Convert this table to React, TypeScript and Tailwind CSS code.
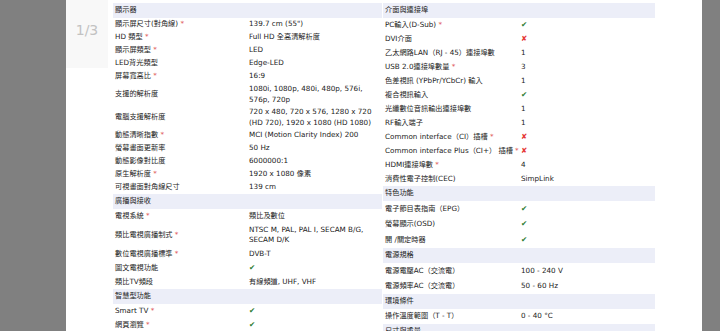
import React from "react";

type Val = "check" | "cross" | string[];
type Row = { label: string; star?: boolean; value: Val; h: string };
type Section = { title: string; rows: Row[] };

const leftSections: Section[] = [
  {
    title: "顯示器",
    rows: [
      { label: "顯示屏尺寸(對角線)", star: true, value: ["139.7 cm (55\")"], h: "h-[13px]" },
      { label: "HD 類型", star: true, value: ["Full HD 全高清解析度"], h: "h-[13px]" },
      { label: "顯示屏類型", star: true, value: ["LED"], h: "h-[13px]" },
      { label: "LED背光類型", value: ["Edge-LED"], h: "h-[13px]" },
      { label: "屏幕寬高比", star: true, value: ["16:9"], h: "h-[13px]" },
      { label: "支援的解析度", value: ["1080i, 1080p, 480i, 480p, 576i,", "576p, 720p"], h: "h-[23px]" },
      { label: "電腦支援解析度", value: ["720 x 480, 720 x 576, 1280 x 720", "(HD 720), 1920 x 1080 (HD 1080)"], h: "h-[23px]" },
      { label: "動態清晰指數", star: true, value: ["MCI (Motion Clarity Index) 200"], h: "h-[13px]" },
      { label: "螢幕畫面更新率", value: ["50 Hz"], h: "h-[13px]" },
      { label: "動態影像對比度", value: ["6000000:1"], h: "h-[13px]" },
      { label: "原生解析度", star: true, value: ["1920 x 1080 像素"], h: "h-[13px]" },
      { label: "可視畫面對角線尺寸", value: ["139 cm"], h: "h-[13px]" },
    ],
  },
  {
    title: "廣播與接收",
    rows: [
      { label: "電視系統", star: true, value: ["類比及數位"], h: "h-[14px]" },
      { label: "類比電視廣播制式", star: true, value: ["NTSC M, PAL, PAL I, SECAM B/G,", "SECAM D/K"], h: "h-[24px]" },
      { label: "數位電視廣播標準", star: true, value: ["DVB-T"], h: "h-[14px]" },
      { label: "圖文電視功能", value: "check", h: "h-[14px]" },
      { label: "類比TV頻段", value: ["有線頻道, UHF, VHF"], h: "h-[14px]" },
    ],
  },
  {
    title: "智慧型功能",
    rows: [
      { label: "Smart TV", star: true, value: "check", h: "h-[14px]" },
      { label: "網頁瀏覽", star: true, value: "check", h: "h-[14px]" },
    ],
  },
];

const rightSections: Section[] = [
  {
    title: "介面與連接埠",
    rows: [
      { label: "PC輸入(D-Sub)", star: true, value: "check", h: "h-[14px]" },
      { label: "DVI介面", value: "cross", h: "h-[14px]" },
      { label: "乙太網路LAN（RJ - 45）連接埠數", value: ["1"], h: "h-[14px]" },
      { label: "USB 2.0連接埠數量", star: true, value: ["3"], h: "h-[14px]" },
      { label: "色差視訊 (YPbPr/YCbCr) 輸入", value: ["1"], h: "h-[14px]" },
      { label: "複合視訊輸入", value: "check", h: "h-[14px]" },
      { label: "光纖數位音訊輸出連接埠數", value: ["1"], h: "h-[14px]" },
      { label: "RF輸入端子", value: ["1"], h: "h-[14px]" },
      { label: "Common interface（CI）插槽", star: true, value: "cross", h: "h-[14px]" },
      { label: "Common interface Plus（CI+） 插槽", star: true, value: "cross", h: "h-[14px]" },
      { label: "HDMI連接埠數", star: true, value: ["4"], h: "h-[14px]" },
      { label: "消費性電子控制(CEC)", value: ["SimpLink"], h: "h-[14px]" },
    ],
  },
  {
    title: "特色功能",
    rows: [
      { label: "電子節目表指南（EPG）", value: "check", h: "h-[15.7px]" },
      { label: "螢幕顯示(OSD)", value: "check", h: "h-[15.7px]" },
      { label: "開 /關定時器", value: "check", h: "h-[15.7px]" },
    ],
  },
  {
    title: "電源規格",
    rows: [
      { label: "電源電壓AC（交流電）", value: ["100 - 240 V"], h: "h-[15.5px]" },
      { label: "電源頻率AC（交流電）", value: ["50 - 60 Hz"], h: "h-[15.5px]" },
    ],
  },
  {
    title: "環境條件",
    rows: [{ label: "操作溫度範圍（T - T）", value: ["0 - 40 °C"], h: "h-[15px]" }],
  },
  { title: "尺寸與重量", rows: [] },
];

function Value({ v }: { v: Val }) {
  if (v === "check") return <span className="text-[#2e7d32] text-[7.5px]">✔</span>;
  if (v === "cross") return <span className="text-[#e53935] text-[7.5px]">✘</span>;
  return (
    <div className="leading-[10.5px]">
      {v.map((line, i) => (
        <div key={i} className="whitespace-nowrap">
          {line}
        </div>
      ))}
    </div>
  );
}

function Table({ sections, width, labelW }: { sections: Section[]; width: string; labelW: string }) {
  return (
    <div className={`${width} flex flex-col`}>
      {sections.map((s) => (
        <div key={s.title} className="flex flex-col">
          <div className="h-[15px] bg-[#eceef8] flex items-center pl-[2px] text-[#222]">{s.title}</div>
          {s.rows.map((r) => (
            <div key={r.label} className={`${r.h} flex items-center text-[#222]`}>
              <div className={`${labelW} shrink-0 pl-[2px] whitespace-nowrap`}>
                {r.label}
                {r.star && <span className="text-[#e05a5a]"> *</span>}
              </div>
              <div className="flex-1">
                <Value v={r.value} />
              </div>
            </div>
          ))}
        </div>
      ))}
    </div>
  );
}

export default function App() {
  return (
    <div
      className="w-[720px] h-[331px] overflow-hidden bg-[#808080] flex text-[7.2px] leading-[10.5px]"
      style={{ fontFamily: '"DejaVu Sans", "Noto Sans CJK TC", sans-serif' }}
    >
      <div className="w-[66px] shrink-0" />
      <div className="flex-1 bg-white flex items-start">
        <div className="w-[42px] h-[68px] shrink-0 bg-[#f8f8f8] flex items-center justify-center pb-[8px]">
          <span className="text-[#c2c2c2] text-[14px]">1/3</span>
        </div>
        <div className="ml-[5px] mt-[3px] flex gap-[1px]">
          <Table sections={leftSections} width="w-[269px]" labelW="w-[136px]" />
          <Table sections={rightSections} width="w-[272px]" labelW="w-[138px]" />
        </div>
      </div>
      <div className="w-[18px] shrink-0" />
    </div>
  );
}
